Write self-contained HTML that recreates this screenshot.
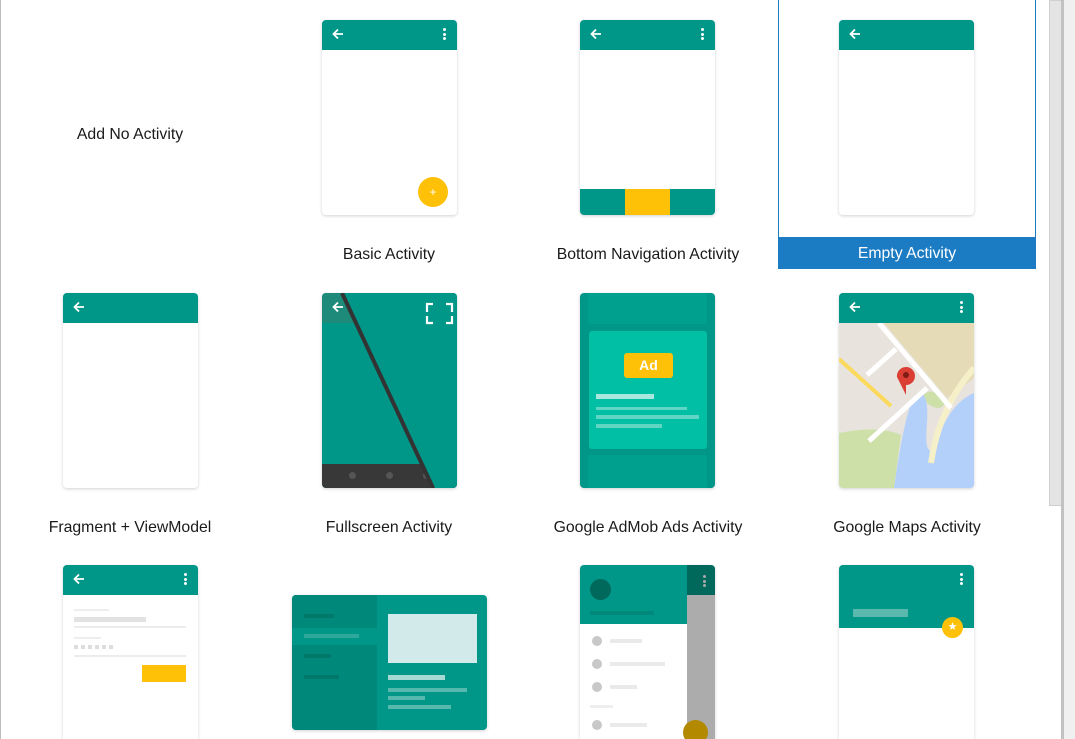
<!DOCTYPE html>
<html style="width:1075px;height:739px;overflow:hidden"><head><meta charset="utf-8"><style>
*{margin:0;padding:0;box-sizing:border-box}
body{width:1075px;height:739px;overflow:hidden;background:#fff;position:relative;font-family:"Liberation Sans",sans-serif}
.a{position:absolute}
.ph{position:absolute;width:135px;height:195px;border-radius:4px;background:#fff;overflow:hidden;box-shadow:0 1px 3px rgba(0,0,0,.18)}
.tb{position:absolute;left:0;top:0;width:100%;height:30px;background:#009688}
.lbl{position:absolute;width:258px;text-align:center;font-size:15.8px;line-height:18px;color:#1a1a1a}
.back{position:absolute;left:9px;top:7px}
.dots{position:absolute;right:11px;top:8px;width:3px}
.dots i{display:block;width:3px;height:3px;background:#fff;border-radius:50%;margin-bottom:1.5px}
</style></head><body>
<div class="a" style="left:0;top:0;width:1px;height:739px;background:#bdbdbd"></div>
<div class="a" style="left:1049px;top:0;width:13px;height:506px;background:#e4e4e4;border:1px solid #cfcfcf"></div>
<div class="a" style="left:1061px;top:0;width:3px;height:739px;background:#c2c2c2"></div>
<div class="a" style="left:1064px;top:0;width:11px;height:739px;background:#f0f0f0"></div>

<svg width="0" height="0" style="position:absolute"><defs>
<symbol id="ar" viewBox="0 0 14 14"><path d="M12 7H3M7 2.5L2.5 7L7 11.5" stroke="#fff" stroke-width="1.8" fill="none"/></symbol>
</defs></svg>

<div class="lbl" style="left:1px;top:126px">Add No Activity</div>

<div class="ph" style="left:322px;top:20px"><div class="tb"><svg class="back" width="14" height="14"><use href="#ar"/></svg><div class="dots"><i></i><i></i><i></i></div></div>
<div class="a" style="left:96px;top:157px;width:30px;height:30px;border-radius:50%;background:#ffc107;color:#fff;font-size:12px;text-align:center;line-height:30px">+</div></div>
<div class="lbl" style="left:260px;top:246px">Basic Activity</div>

<div class="ph" style="left:580px;top:20px"><div class="tb"><svg class="back" width="14" height="14"><use href="#ar"/></svg><div class="dots"><i></i><i></i><i></i></div></div>
<div class="a" style="left:0;top:169px;width:135px;height:26px;background:#009688"></div>
<div class="a" style="left:45px;top:169px;width:45px;height:26px;background:#ffc107"></div></div>
<div class="lbl" style="left:519px;top:246px">Bottom Navigation Activity</div>

<div class="a" style="left:778px;top:0;width:258px;height:269px;border:1px solid #1b7bc3;border-top:none"></div>
<div class="a" style="left:778px;top:237px;width:258px;height:32px;background:#1b7bc3"></div>
<div class="ph" style="left:839px;top:20px"><div class="tb"><svg class="back" width="14" height="14"><use href="#ar"/></svg></div></div>
<div class="lbl" style="left:778px;top:245px;color:#fff">Empty Activity</div>

<div class="ph" style="left:63px;top:293px"><div class="tb"><svg class="back" width="14" height="14"><use href="#ar"/></svg></div></div>
<div class="lbl" style="left:1px;top:519px">Fragment + ViewModel</div>

<div class="ph" style="left:322px;top:293px;background:#009688">
<div class="a" style="left:0;top:0;width:32px;height:30px;background:#1d8a7a"></div>
<svg class="back" width="14" height="14"><use href="#ar"/></svg>
<div class="a" style="left:0;top:171px;width:135px;height:24px;background:#383838"></div>
<div class="a" style="left:27px;top:179px;width:7px;height:7px;border-radius:50%;background:#555"></div>
<div class="a" style="left:64px;top:179px;width:7px;height:7px;border-radius:50%;background:#555"></div>
<div class="a" style="left:101px;top:179px;width:7px;height:7px;border-radius:50%;background:#555"></div>
<svg class="a" style="left:0;top:0" width="135" height="195"><path d="M22 0L113 195H135V0Z" fill="#009688"/><path d="M20 0L111 195" stroke="#333" stroke-width="4"/>
<path d="M105 19v-8h6M124 11h6v8M130 23v7h-6M111 30h-6v-7" stroke="#fff" stroke-width="2.2" fill="none"/></svg>
</div>
<div class="lbl" style="left:260px;top:519px">Fullscreen Activity</div>

<div class="ph" style="left:580px;top:293px;background:#009688">
<div class="a" style="left:8px;top:0;width:119px;height:31px;background:#00a08e;border-radius:0 0 3px 3px"></div>
<div class="a" style="left:9px;top:38px;width:118px;height:118px;background:#00bfa5;border-radius:3px"></div>
<div class="a" style="left:8px;top:162px;width:119px;height:33px;background:#00a08e;border-radius:3px 3px 0 0"></div>
<div class="a" style="left:44px;top:60px;width:49px;height:25px;background:#ffc107;border-radius:3px;color:#fff;font-weight:bold;font-size:14px;text-align:center;line-height:25px">Ad</div>
<div class="a" style="left:16px;top:101px;width:58px;height:5px;background:#a8e8de"></div>
<div class="a" style="left:16px;top:114px;width:91px;height:3px;background:#5fd6c4"></div>
<div class="a" style="left:16px;top:122px;width:103px;height:4px;background:#5fd6c4"></div>
<div class="a" style="left:16px;top:131px;width:66px;height:4px;background:#5fd6c4"></div>
</div>
<div class="lbl" style="left:519px;top:519px">Google AdMob Ads Activity</div>

<div class="ph" style="left:839px;top:293px">
<svg class="a" style="left:0;top:30px" width="135" height="165">
<rect width="135" height="165" fill="#e8e4dd"/>
<path d="M45 0H135V55L108 75Z" fill="#e5dcb7"/>
<path d="M0 110Q40 102 62 112L55 165H0Z" fill="#cde0a8"/>
<path d="M82 75Q92 60 106 80Q100 92 82 75Z" fill="#cde0a8"/>
<path d="M55 165Q68 72 80 70Q90 70 88 100Q85 135 95 125Q110 80 135 70V165Z" fill="#b3d0fb"/>
<path d="M92 140Q100 85 135 45" stroke="#f6f0c8" stroke-width="6" fill="none"/>
<path d="M40 0L112 85M57 26L28 52M88 65L30 118" stroke="#fff" stroke-width="5" fill="none"/>
<path d="M0 36L52 83" stroke="#fbd95c" stroke-width="4"/>
<path d="M67 44a9 9 0 0 1 0 18L67 72L58 54a9 9 0 0 1 9-10Z" fill="#db3e33"/>
<circle cx="67" cy="52" r="3" fill="#801a14"/>
</svg>
<div class="tb"><svg class="back" width="14" height="14"><use href="#ar"/></svg><div class="dots"><i></i><i></i><i></i></div></div>
</div>
<div class="lbl" style="left:778px;top:519px">Google Maps Activity</div>

<div class="ph" style="left:63px;top:565px"><div class="tb"><svg class="back" width="14" height="14"><use href="#ar"/></svg><div class="dots"><i></i><i></i><i></i></div></div>
<div class="a" style="left:11px;top:44px;width:35px;height:2px;background:#eee"></div>
<div class="a" style="left:11px;top:52px;width:72px;height:5px;background:#e2e2e2"></div>
<div class="a" style="left:11px;top:61px;width:112px;height:2px;background:#ececec"></div>
<div class="a" style="left:11px;top:72px;width:27px;height:2px;background:#eee"></div>
<div class="a" style="left:11px;top:80px;width:42px;height:4px;background:repeating-linear-gradient(90deg,#ddd 0 4px,#fff 4px 7px)"></div>
<div class="a" style="left:11px;top:90px;width:112px;height:2px;background:#ececec"></div>
<div class="a" style="left:79px;top:100px;width:44px;height:17px;background:#ffc107"></div>
</div>

<div class="ph" style="left:292px;top:595px;width:195px;height:135px;background:#009688">
<div class="a" style="left:0;top:0;width:85px;height:135px;background:#00897b"></div>
<div class="a" style="left:0;top:33px;width:85px;height:17px;background:#009688"></div>
<div class="a" style="left:12px;top:19px;width:30px;height:4px;background:#00796b"></div>
<div class="a" style="left:12px;top:39px;width:55px;height:4px;background:#2da89a"></div>
<div class="a" style="left:12px;top:59px;width:27px;height:4px;background:#00796b"></div>
<div class="a" style="left:12px;top:80px;width:35px;height:4px;background:#00796b"></div>
<div class="a" style="left:96px;top:19px;width:89px;height:49px;background:#d2ebea"></div>
<div class="a" style="left:96px;top:80px;width:57px;height:5px;background:#a5d9d3"></div>
<div class="a" style="left:96px;top:93px;width:79px;height:4px;background:#55b9ad"></div>
<div class="a" style="left:96px;top:101px;width:37px;height:4px;background:#55b9ad"></div>
<div class="a" style="left:96px;top:110px;width:63px;height:4px;background:#55b9ad"></div>
</div>

<div class="ph" style="left:580px;top:565px">
<div class="a" style="left:107px;top:0;width:28px;height:30px;background:#00695c"></div>
<div class="a" style="left:107px;top:30px;width:28px;height:165px;background:#acacac"></div>
<div class="a" style="left:103px;top:155px;width:25px;height:25px;border-radius:50%;background:#b38900"></div>
<div class="dots" style="top:10px;right:9px"><i style="background:#aaa"></i><i style="background:#aaa"></i><i style="background:#aaa"></i></div>
<div class="a" style="left:0;top:0;width:107px;height:59px;background:#009688"></div>
<div class="a" style="left:10px;top:14px;width:21px;height:21px;border-radius:50%;background:#00695c"></div>
<div class="a" style="left:10px;top:46px;width:64px;height:4px;background:#00897b"></div>
<div class="a" style="left:12px;top:71px;width:10px;height:10px;border-radius:50%;background:#c8c8c8"></div><div class="a" style="left:30px;top:74px;width:32px;height:4px;background:#eaeaea"></div>
<div class="a" style="left:12px;top:94px;width:10px;height:10px;border-radius:50%;background:#c8c8c8"></div><div class="a" style="left:30px;top:97px;width:55px;height:4px;background:#eaeaea"></div>
<div class="a" style="left:12px;top:117px;width:10px;height:10px;border-radius:50%;background:#c8c8c8"></div><div class="a" style="left:30px;top:120px;width:27px;height:4px;background:#eaeaea"></div>
<div class="a" style="left:10px;top:140px;width:23px;height:3px;background:#eee"></div>
<div class="a" style="left:12px;top:155px;width:10px;height:10px;border-radius:50%;background:#c8c8c8"></div><div class="a" style="left:30px;top:158px;width:37px;height:4px;background:#eaeaea"></div>
</div>

<div class="ph" style="left:839px;top:565px">
<div class="a" style="left:0;top:0;width:135px;height:63px;background:#009688"></div>
<div class="dots"><i></i><i></i><i></i></div>
<div class="a" style="left:14px;top:44px;width:55px;height:8px;background:#5bb8ad"></div>
<div class="a" style="left:103px;top:52px;width:21px;height:21px;border-radius:50%;background:#ffc107;color:#fff;font-size:11px;text-align:center;line-height:21px">★</div>
</div>
</body></html>
